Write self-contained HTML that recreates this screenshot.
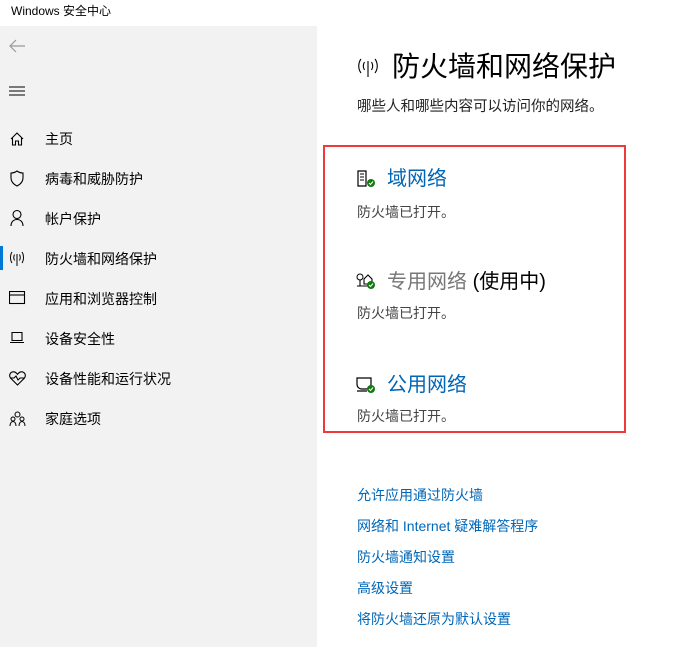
<!DOCTYPE html>
<html><head><meta charset="utf-8"><style>
*{margin:0;padding:0;box-sizing:border-box}
body{width:682px;height:647px;overflow:hidden;background:#fff;font-family:"Liberation Sans","Noto Sans CJK SC",sans-serif;position:relative;color:#000}
.abs{position:absolute;white-space:nowrap}
#side{position:absolute;left:0;top:26px;width:317px;height:621px;background:#f2f2f2}
.nav{position:absolute;left:45px;font-size:14px;line-height:16px}
.ic{position:absolute;left:9px}
.link{position:absolute;left:357px;font-size:14px;color:#0067b8;line-height:16px}
.sub{font-size:14px;color:#444}
</style></head><body>
<div class="abs" style="left:11px;top:3px;font-size:12px;line-height:16px">Windows 安全中心</div>
<div id="side"></div>
<svg class="abs" style="left:8px;top:39px" width="18" height="14"><path d="M17 7H2M8 1L2 7l6 6" stroke="#999" fill="none" stroke-width="1.2"/></svg>
<svg class="abs" style="left:9px;top:86px" width="17" height="10"><path d="M0 1h16M0 5h16M0 9h16" stroke="#000" stroke-width="1.1"/></svg>

<svg class="ic" style="top:131px" width="16" height="16"><path d="M2 8L8 2l6 6M3.5 7v7h3v-4h3v4h3V7" stroke="#000" fill="none" stroke-width="1.1"/></svg>
<div class="nav" style="top:131px">主页</div>
<svg class="ic" style="top:170px" width="16" height="18"><path d="M8 1c2 1.5 4 2 6 2v5c0 4-3 6.5-6 8-3-1.5-6-4-6-8V3c2 0 4-.5 6-2z" stroke="#000" fill="none" stroke-width="1.1"/></svg>
<div class="nav" style="top:171px">病毒和威胁防护</div>
<svg class="ic" style="top:209px" width="16" height="18"><circle cx="8" cy="5.5" r="4" stroke="#000" fill="none" stroke-width="1.1"/><path d="M2 17c0-4 2.5-6.5 6-6.5s6 2.5 6 6.5" stroke="#000" fill="none" stroke-width="1.1"/></svg>
<div class="nav" style="top:211px">帐户保护</div>
<div class="abs" style="left:0;top:246px;width:3px;height:24px;background:#0078d7"></div>
<svg class="ic" style="top:250px" width="16" height="16"><path d="M3 2c-2 3-2 8 0 11M13 2c2 3 2 8 0 11M5.5 4.5c-1 2-1 4 0 6M10.5 4.5c1 2 1 4 0 6M8 4v12" stroke="#000" fill="none" stroke-width="1"/></svg>
<div class="nav" style="top:251px">防火墙和网络保护</div>
<svg class="ic" style="top:291px" width="17" height="14"><rect x=".5" y=".5" width="15" height="12" stroke="#000" fill="none" stroke-width="1.1"/><path d="M1 4h15" stroke="#000" stroke-width="1.1"/></svg>
<div class="nav" style="top:291px">应用和浏览器控制</div>
<svg class="ic" style="top:332px" width="16" height="12"><path d="M3 .5h10v8H3zM1 10.5h14" stroke="#000" fill="none" stroke-width="1.1"/></svg>
<div class="nav" style="top:331px">设备安全性</div>
<svg class="ic" style="top:371px" width="17" height="15"><path d="M8.5 14L1.5 7C-.5 4 1.5.8 4.5.8c2 0 3 1.2 4 2.5 1-1.3 2-2.5 4-2.5 3 0 5 3.2 3 6.2zM1 7h4l2-2 2 4 2-2h5" stroke="#000" fill="none" stroke-width="1.1"/></svg>
<div class="nav" style="top:371px">设备性能和运行状况</div>
<svg class="ic" style="top:411px" width="17" height="16"><circle cx="8.5" cy="3.5" r="2.5" stroke="#000" fill="none"/><circle cx="4" cy="8" r="2" stroke="#000" fill="none"/><circle cx="13" cy="8" r="2" stroke="#000" fill="none"/><path d="M1 15c0-3 1.5-4.5 3-4.5s3 1.5 3 4.5M10 15c0-3 1.5-4.5 3-4.5s3 1.5 3 4.5" stroke="#000" fill="none"/></svg>
<div class="nav" style="top:411px">家庭选项</div>

<svg class="abs" style="left:357px;top:56px" width="22" height="22"><path d="M4 3c-3 4-3 10 0 14M18 3c3 4 3 10 0 14M7.5 6c-1.5 2.5-1.5 5.5 0 8M14.5 6c1.5 2.5 1.5 5.5 0 8M11 5v16" stroke="#000" fill="none" stroke-width="1.1"/></svg>
<div class="abs" style="left:392px;top:50px;font-size:28px;line-height:34px">防火墙和网络保护</div>
<div class="abs" style="left:357px;top:98px;font-size:14.5px;line-height:18px;color:#222">哪些人和哪些内容可以访问你的网络。</div>

<div class="abs" style="left:323px;top:145px;width:303px;height:288px;border:2px solid #f03a3a"></div>

<svg class="abs" style="left:356px;top:170px" width="20" height="18"><path d="M2 1h8v15H2z" stroke="#000" fill="none" stroke-width="1.2"/><path d="M4 4h4M4 7h4M4 10h4" stroke="#000"/><circle cx="15" cy="13" r="4" fill="#107c10"/><path d="M13 13l1.5 1.5 2.5-3" stroke="#fff" fill="none"/></svg>
<div class="abs" style="left:387px;top:167px;font-size:20px;line-height:24px;color:#0067b8">域网络</div>
<div class="abs sub" style="left:357px;top:203px;line-height:18px">防火墙已打开。</div>

<svg class="abs" style="left:356px;top:272px" width="20" height="18"><circle cx="4" cy="5" r="3" stroke="#000" fill="none"/><path d="M4 8v6M1 14h12M8 7l4-4 4 4v5h-8z" stroke="#000" fill="none" stroke-width="1.1"/><circle cx="15" cy="13" r="4" fill="#107c10"/><path d="M13 13l1.5 1.5 2.5-3" stroke="#fff" fill="none"/></svg>
<div class="abs" style="left:387px;top:270px;font-size:20px;line-height:24px;color:#777">专用网络 <span style="color:#000">(使用中)</span></div>
<div class="abs sub" style="left:357px;top:304px;line-height:18px">防火墙已打开。</div>

<svg class="abs" style="left:356px;top:376px" width="20" height="18"><path d="M1 2h14v6c0 3-2 5-5 5H6c-3 0-5-2-5-5zM1 15h10" stroke="#000" fill="none" stroke-width="1.2"/><circle cx="15" cy="13" r="4" fill="#107c10"/><path d="M13 13l1.5 1.5 2.5-3" stroke="#fff" fill="none"/></svg>
<div class="abs" style="left:387px;top:373px;font-size:20px;line-height:24px;color:#0067b8">公用网络</div>
<div class="abs sub" style="left:357px;top:407px;line-height:18px">防火墙已打开。</div>

<div class="link" style="top:487px">允许应用通过防火墙</div>
<div class="link" style="top:518px">网络和 Internet 疑难解答程序</div>
<div class="link" style="top:549px">防火墙通知设置</div>
<div class="link" style="top:580px">高级设置</div>
<div class="link" style="top:611px">将防火墙还原为默认设置</div>
</body></html>
